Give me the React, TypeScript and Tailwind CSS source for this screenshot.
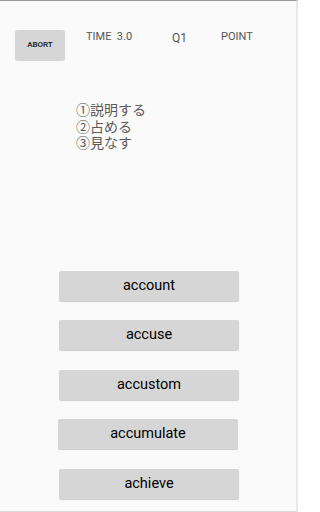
const choices = ['account', 'accuse', 'accustom', 'accumulate', 'achieve'];

export default function App() {
  return (
    <div className="w-[298px] h-[512px] overflow-hidden bg-[#fafafa] border-t border-t-[#9a9a9a] border-r-2 border-r-[#e8e8e8] border-b border-b-[#d8d8d8] font-['Roboto',sans-serif]">
      <div className="flex items-start pt-[29px]">
        <button className="ml-[15px] w-[50px] h-[30px] rounded-[3px] bg-[#d6d6d6] shadow-[0_1px_1px_rgba(0,0,0,0.15)] text-[8px] font-medium text-[#111] flex items-center justify-center">
          ABORT
        </button>
        <div className="ml-[21px] w-[86px] text-[11px] leading-[13px] text-[#555] whitespace-pre">
          TIME  3.0
        </div>
        <div className="w-[49px] text-[12px] leading-[14px] text-[#555] mt-[1px]">Q1</div>
        <div className="text-[11px] leading-[13px] text-[#555]">POINT</div>
      </div>

      <div className="ml-[76px] mt-[41px] text-[14px] leading-[16.5px] text-[#5a5a5a] font-['Noto_Sans_CJK_JP','Roboto',sans-serif]">
        <div>①説明する</div>
        <div>②占める</div>
        <div>③見なす</div>
      </div>

      <div className="mt-[120px] flex flex-col gap-[19.5px]">
        {choices.map((word) => (
          <button
            key={word}
            className={`${word === 'accumulate' ? 'ml-[58px]' : 'ml-[59px]'} w-[180px] h-[30px] rounded-[2px] bg-[#d6d6d6] shadow-[0_1px_1px_rgba(0,0,0,0.18)] text-[14.5px] font-normal text-black flex items-center justify-center`}
          >
            {word}
          </button>
        ))}
      </div>
    </div>
  );
}
